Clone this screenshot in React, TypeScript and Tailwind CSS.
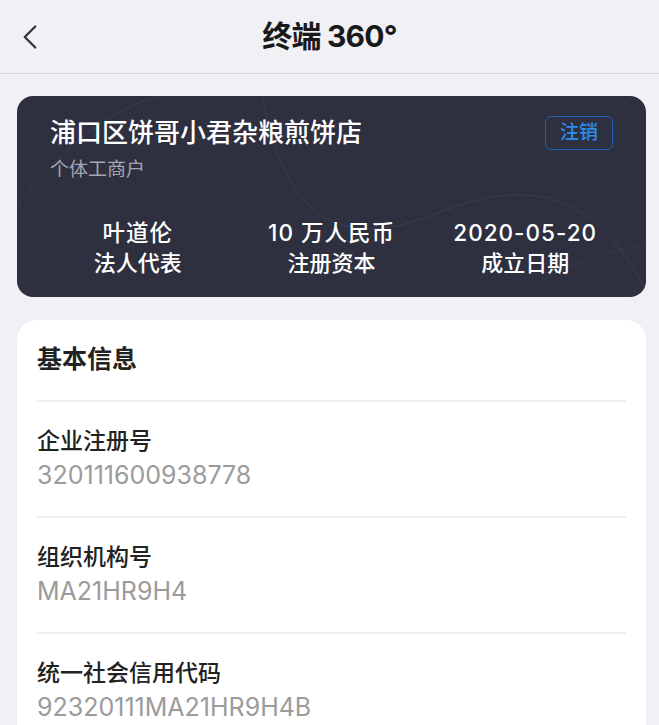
import { ChevronLeft } from "lucide-react";

const font = { fontFamily: '"Inter", "Noto Sans CJK SC", sans-serif' };

const stats = [
  { value: "叶道伦", label: "法人代表" },
  { value: "10 万人民币", label: "注册资本" },
  { value: "2020-05-20", label: "成立日期" },
];

const rows = [
  { label: "企业注册号", value: "320111600938778" },
  { label: "组织机构号", value: "MA21HR9H4" },
  { label: "统一社会信用代码", value: "92320111MA21HR9H4B" },
];

export default function App() {
  return (
    <div className="min-h-[725px] bg-[#f0f0f5]" style={font}>
      <header className="relative flex h-[74px] items-center justify-center border-b border-[#d9d9de]">
        <ChevronLeft className="absolute left-[9px] top-[16px] h-[42px] w-[42px] text-[#333]" strokeWidth={1.3} />
        <h1 className="text-[30px] font-bold tracking-tight text-[#1a1a1a]">终端 360°</h1>
      </header>

      <div className="pl-[17px] pr-[13px] pt-[22px]">
        <section className="relative h-[201px] overflow-hidden rounded-[16px] bg-[#2e303f] px-[33px] pt-[19px]">
          <svg className="absolute inset-0 h-full w-full" viewBox="0 0 629 201" fill="none">
            <path d="M0 110 C40 60 80 20 140 0" stroke="#3b3e53" strokeWidth="1" />
            <path d="M245 0 C255 60 280 120 330 130 C400 145 440 90 520 100 C580 108 610 160 629 195" stroke="#3b3e53" strokeWidth="1" />
            <path d="M500 201 C540 170 600 150 629 150" stroke="#363a4e" strokeWidth="1" />
          </svg>
          <div className="relative flex items-start justify-between">
            <div>
              <div className="text-[26px] font-medium leading-[36px] text-white">浦口区饼哥小君杂粮煎饼店</div>
              <div className="mt-[6px] text-[19px] leading-[26px] text-[#a3a5b0]">个体工商户</div>
            </div>
            <span className="mt-[1px] rounded-[6px] border border-[#1f5fb8] px-[14px] py-[2px] text-[19px] font-medium leading-[28px] text-[#2d8cf0]">
              注销
            </span>
          </div>
          <div className="relative mt-[35px] grid grid-cols-3 -mx-[9px]">
            {stats.map((s) => (
              <div key={s.label} className="flex flex-col items-center text-white">
                <div className="text-[22.5px] font-medium leading-[30px] tracking-[1px]">{s.value}</div>
                <div className="text-[22px] font-medium leading-[30px]">{s.label}</div>
              </div>
            ))}
          </div>
        </section>

        <section className="mt-[23px] rounded-t-[20px] bg-white px-[20px]">
          <h2 className="flex h-[80px] items-center text-[25px] font-bold text-[#222]">基本信息</h2>
          {rows.map((r) => (
            <div key={r.label} className="border-t-2 border-[#efeff1] pt-[22px] pb-[24px]">
              <div className="text-[23px] font-medium leading-[34px] text-[#222]">{r.label}</div>
              <div className="text-[25px] leading-[34px] text-[#9b9b9b]">{r.value}</div>
            </div>
          ))}
        </section>
      </div>
    </div>
  );
}
